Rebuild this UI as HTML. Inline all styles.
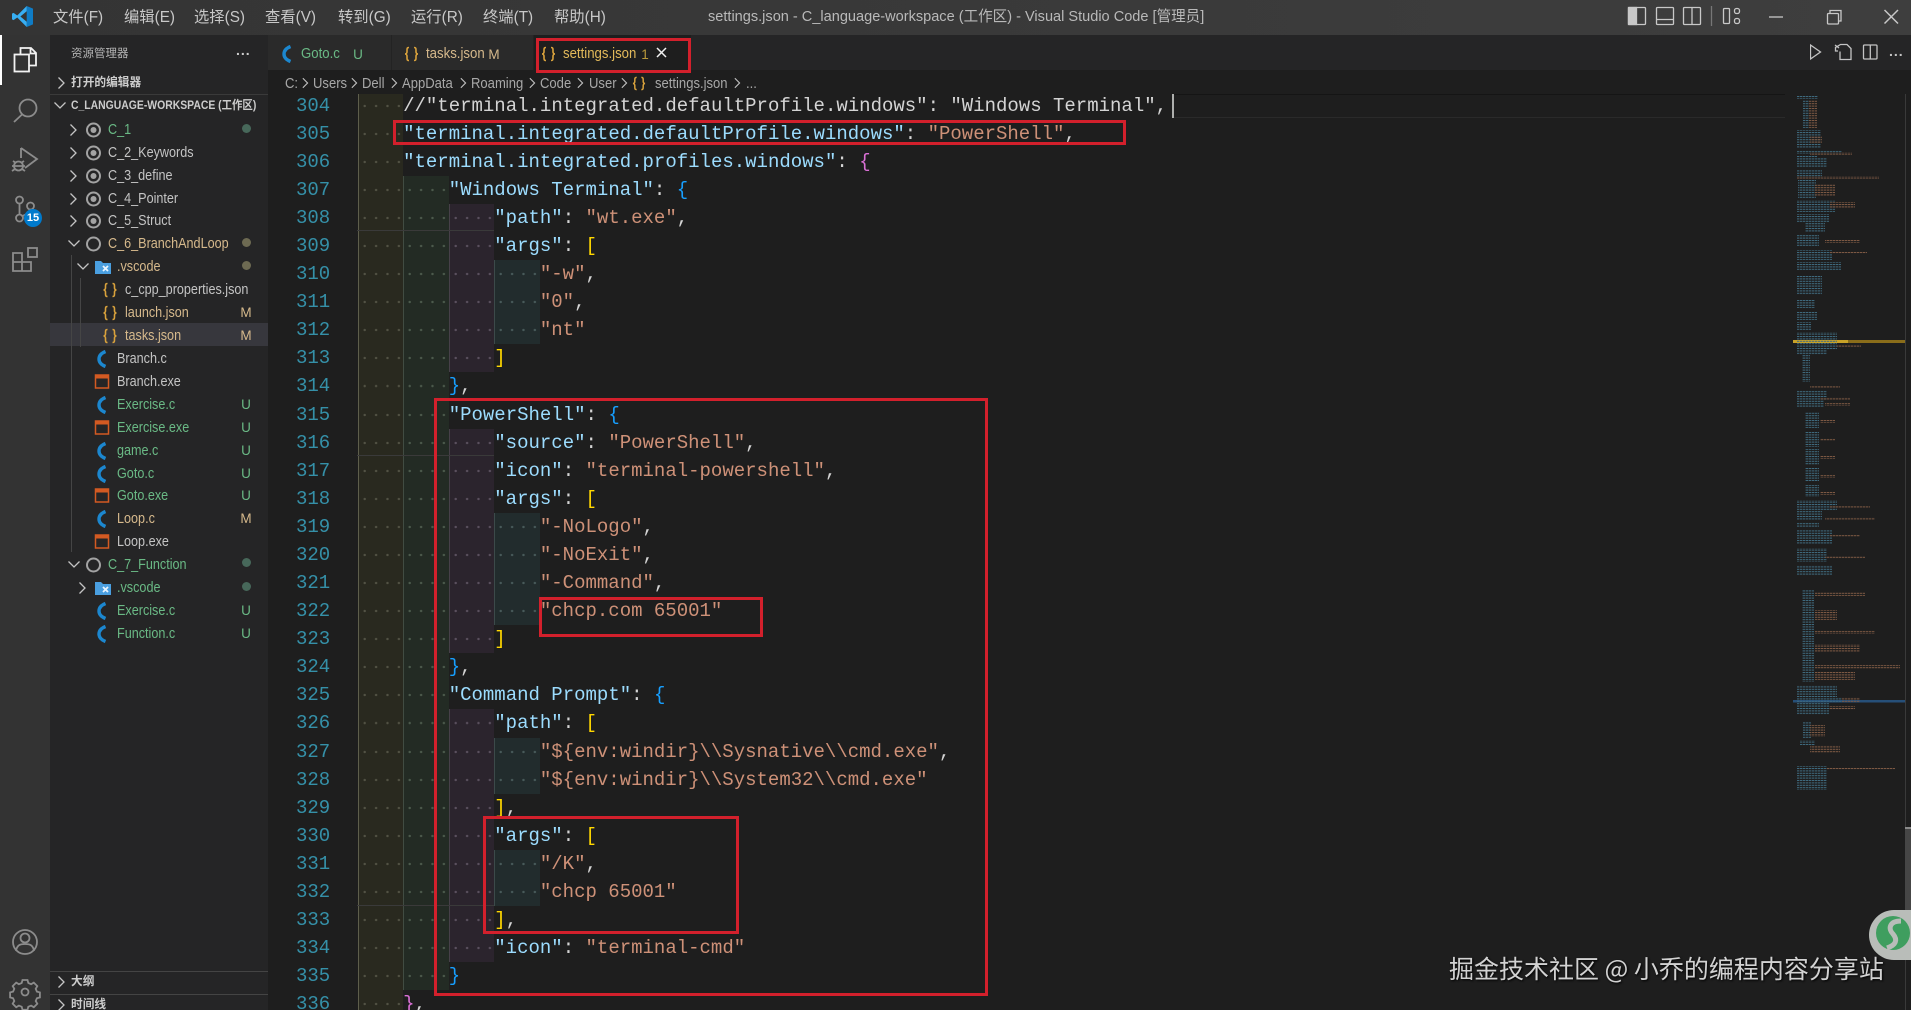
<!DOCTYPE html>
<html><head><meta charset="utf-8"><title>settings.json - C_language-workspace</title>
<style>
*{box-sizing:border-box;margin:0;padding:0}
html,body{width:1911px;height:1010px;overflow:hidden;background:#1e1e1e}
body{position:relative;font-family:"Liberation Sans","Noto Sans CJK SC",sans-serif;color:#ccc}
.a{position:absolute}
#title{left:0;top:0;width:1911px;height:35px;background:linear-gradient(to right,#343434,#3e3e3e)}
.m{position:absolute;top:8px;font-size:15.3px;line-height:19px;color:#c8c8c8;white-space:nowrap;transform-origin:0 50%;}
#wt{position:absolute;left:708px;top:7px;font-size:15px;line-height:20px;color:#b9b9b9;white-space:nowrap;transform:scaleX(.97);transform-origin:0 50%}
#act{left:0;top:35px;width:50px;height:975px;background:#333}
#side{left:50px;top:35px;width:218px;height:975px;background:#252526}
.t{position:absolute;white-space:nowrap;font-size:14.5px;line-height:23px;transform:scaleX(.87);transform-origin:0 50%;margin-top:1.5px}
.tt{transform:scaleX(.91);margin-top:0}
.b{position:absolute;white-space:nowrap;font-size:11.7px;line-height:16px;font-weight:bold;color:#ccc;transform-origin:0 50%}
.sel{left:50px;top:323px;width:218px;height:23px;background:#37373d}
.gn{color:#6ab985}.or{color:#d6b98c}.wh{color:#c4c4c4}
.st{position:absolute;left:239px;width:14px;text-align:center;font-size:13.5px;line-height:23px;margin-top:1px}
.dot{position:absolute;left:241.5px;width:9px;height:9px;border-radius:50%}
#tabs{left:268px;top:35px;width:1643px;height:35px;background:#252526}
.tab{position:absolute;top:35px;height:35px;background:#2a2a2a}
#bc{left:268px;top:70px;width:1643px;height:24px;background:#1e1e1e}
.c{position:absolute;top:72.5px;font-size:14.5px;line-height:23px;color:#a8a8a8;white-space:nowrap;transform:scaleX(.9);transform-origin:0 50%}
#ed{left:268px;top:94px;width:1643px;height:916px;background:#1e1e1e;overflow:hidden}
#code{position:absolute;left:-268px;top:-2.3px;width:1911px;font-family:"Liberation Mono",monospace;font-size:19px;line-height:28.08px;color:#d4d4d4}
.l{position:relative;height:28.08px;padding-left:357.5px;white-space:pre}
.l u{position:absolute;left:296px;top:0;text-decoration:none;color:#3590a8}
.l s{display:inline-block;width:45.6px;height:28.08px;vertical-align:top;text-decoration:none;background-size:11.4px 28.08px;background-position:0 0}
.l s:nth-of-type(1){background-image:radial-gradient(circle,#525244 1px,transparent 1.4px);background-color:#29291f;border-left:1px solid #5e5e4c}
.l s:nth-of-type(2){background-image:radial-gradient(circle,#4c5a4c 1px,transparent 1.4px);background-color:#232b24;border-left:1px solid #414c42}
.l s:nth-of-type(3){background-image:radial-gradient(circle,#5a505e 1px,transparent 1.4px);background-color:#2b242d;border-left:1px solid #474049}
.l s:nth-of-type(4){background-image:radial-gradient(circle,#485a5a 1px,transparent 1.4px);background-color:#222c2d;border-left:1px solid #3c4a4a}
i{font-style:normal}
.k{color:#9cdcfe}.v{color:#ce9178}.y{color:#ffd700}.p{color:#da70d6}.q{color:#179fff}
.rb{position:absolute;border:3px solid #d3202c}
.hl{position:absolute;left:357px;width:137px;height:1px;background:#3a3a3a}
#wm{position:absolute;left:1449px;top:949px;font-family:"Noto Sans CJK SC",sans-serif;font-size:25px;line-height:38px;color:#d2d2d2;white-space:nowrap;text-shadow:1px 1px 2px #000}
</style></head><body>

<div class="a" id="title"></div>
<svg class="a" style="left:12px;top:6px" width="21" height="21" viewBox="0 0 20 20"><path d="M14 0 20 2.5V17.5L14 20Z" fill="#0f7cc5"/><path d="M14 0 5 9 1.5 6.5 0 7.3V12.7L1.5 13.5 5 11 14 20V15L8 10 14 5Z" fill="#37aef3"/></svg>
<div class="m" style="left:53px">文件(F)</div><div class="m" style="left:124px">编辑(E)</div><div class="m" style="left:194px">选择(S)</div><div class="m" style="left:265px">查看(V)</div><div class="m" style="left:338px">转到(G)</div><div class="m" style="left:411px">运行(R)</div><div class="m" style="left:483px">终端(T)</div><div class="m" style="left:554px">帮助(H)</div>
<div id="wt">settings.json - C_language-workspace (工作区) - Visual Studio Code [管理员]</div>
<svg class="a" style="left:0;top:0" width="1911" height="35" fill="none" stroke="#c8c8c8" stroke-width="1.3">
<rect x="1628.5" y="7.5" width="17" height="17" rx="1"/><rect x="1628.5" y="7.5" width="8" height="17" fill="#c8c8c8"/>
<rect x="1656.5" y="7.5" width="17" height="17" rx="1"/><path d="M1656.5 19.5h17"/>
<rect x="1683.5" y="7.5" width="17" height="17" rx="1"/><path d="M1692 7.5v17"/>
<path d="M1711.5 6v20" stroke="#777"/>
<rect x="1723.5" y="8.5" width="6" height="15" rx="1"/><rect x="1734.5" y="8.5" width="5" height="5" rx="2"/><rect x="1734.5" y="18.5" width="5" height="5" rx="2"/>
<path d="M1769 17h14"/><rect x="1827.5" y="13.5" width="11" height="10.5" rx="1"/><path d="M1830 13v-2.5h11v10.500h-2.500"/>
<path d="M1884.500 10l13.500 13.500M1898 10l-13.500 13.500" stroke-width="1.500"/>
</svg>

<div class="a" id="act"></div>
<div class="a" style="left:0;top:35px;width:2px;height:50px;background:#fff"></div>
<svg class="a" style="left:0;top:35px" width="50" height="975" viewBox="0 35 50 975" fill="none" stroke="#8c8c8c" stroke-width="1.8">
<path d="M20.500 54v-6h10.500l5 5v12.500h-7M30.500 48v5.500h5.500" stroke="#f2f2f2"/><rect x="14.500" y="54.500" width="14.500" height="17" stroke="#f2f2f2"/>
<circle cx="28" cy="108" r="8.500"/><path d="M22 114.500 14 122"/>
<path d="M21 148 37 159 25 168M21 148v10"/><circle cx="18.500" cy="166" r="4.500"/><path d="M12 166h13M13 161l3 2M24 161l-3 2M12 171l3-2M25 171l-3-2"/>
<circle cx="19.500" cy="200" r="3.500"/><circle cx="30.500" cy="206" r="3.500"/><circle cx="19.500" cy="218" r="3.500"/><path d="M19.500 203.500v11M30.500 209.500c0 4-6 5-9 7"/>
<path d="M13 253h9v18h-9zM13 262h18v9h-9"/><rect x="28" y="248" width="9" height="9"/>
<circle cx="25" cy="942" r="12"/><circle cx="25" cy="938" r="4.500"/><path d="M16 951c1-6 4-7 9-7s8 1 9 7"/>
<circle cx="25" cy="992" r="3.500"/><path d="M22.500 980h5l.8 3 2.800 1.200 2.700-1.600 3.500 3.500-1.600 2.700 1.200 2.800 3 .8v5l-3 .8-1.200 2.800 1.600 2.700-3.500 3.500-2.700-1.600-2.800 1.200-.8 3h-5l-.8-3-2.800-1.200-2.700 1.600-3.500-3.500 1.600-2.700-1.200-2.800-3-.8v-5l3-.8 1.200-2.800-1.600-2.700 3.500-3.500 2.700 1.600 2.800-1.200z"/>
<circle cx="33" cy="218" r="9" fill="#007acc" stroke="none"/>
</svg>
<div class="a" style="left:24px;top:211px;width:18px;text-align:center;font-size:11px;line-height:14px;font-weight:bold;color:#fff">15</div>

<div class="a" id="side"></div>
<div class="a sel"></div>
<div class="a" style="left:50px;top:94px;width:218px;height:1px;background:#3a3a3a"></div>
<div class="a" style="left:50px;top:971px;width:218px;height:1px;background:#444"></div>
<div class="a" style="left:50px;top:994px;width:218px;height:1px;background:#444"></div>
<div class="a" style="left:71px;top:255px;width:1px;height:297px;background:#454545"></div>
<div class="a" style="left:80px;top:278px;width:1px;height:69px;background:#454545"></div>
<div class="a" style="left:71px;top:46px;font-size:11.5px;line-height:16px;color:#b5b5b5;white-space:nowrap">资源管理器</div>
<div class="a" style="left:236px;top:40px;font-size:14px;line-height:20px;letter-spacing:1px;color:#ccc;font-weight:bold">...</div>
<div class="b" style="left:71px;top:75px">打开的编辑器</div>
<div class="b" style="left:71px;top:98px;transform:scaleX(.89)">C_LANGUAGE-WORKSPACE (工作区)</div>
<div class="b" style="left:71px;top:974px">大纲</div>
<div class="b" style="left:71px;top:997px">时间线</div>

<svg width="0" height="0" style="position:absolute"><defs>
<symbol id="ci" viewBox="0 0 16 16"><circle cx="8" cy="8" r="6.500" fill="none" stroke="#a3a3a3" stroke-width="2"/><circle cx="8" cy="8" r="3" fill="#a3a3a3"/></symbol>
<symbol id="co" viewBox="0 0 16 16"><circle cx="8" cy="8" r="6.500" fill="none" stroke="#a3a3a3" stroke-width="2"/></symbol>
<symbol id="cf" viewBox="0 0 12 18"><path d="M9.500 1.500C4.500 3.500 3 6 3 9s1.500 5.500 6.500 7.500" fill="none" stroke="#1c87cf" stroke-width="3.400"/></symbol>
<symbol id="ex" viewBox="0 0 15 15"><rect x="1" y="1" width="13" height="13" fill="none" stroke="#d35a22" stroke-width="1.500"/><rect x="1" y="1" width="13" height="3.500" fill="#d35a22"/></symbol>
<symbol id="js" viewBox="0 0 15 16"><path d="M5 1.500C3 1.500 3 2.500 3 4.500v1.500c0 1-.8 2-2 2 1.200 0 2 1 2 2v1.500c0 2 0 3 2 3M10 1.500c2 0 2 1 2 3v1.500c0 1 .8 2 2 2-1.200 0-2 1-2 2v1.500c0 2 0 3-2 3" fill="none" stroke="#d9a23c" stroke-width="1.600"/></symbol>
<symbol id="fd" viewBox="0 0 16 14"><path d="M0 1h6l2 2h8v11H0z" fill="#4a9fe0"/><path d="M8 6l5 5M13 6l-5 5" stroke="#e8f4ff" stroke-width="1.800"/></symbol>
<symbol id="cr" viewBox="0 0 10 14"><path d="M2.500 1.500l5.500 5.500-5.500 5.500" fill="none" stroke="#c4c4c4" stroke-width="1.300"/></symbol>
<symbol id="cd" viewBox="0 0 14 10"><path d="M1.500 1.500l5.500 5.500 5.500-5.500" fill="none" stroke="#c4c4c4" stroke-width="1.300"/></symbol>
<pattern id="pt" width="3" height="2.400" patternUnits="userSpaceOnUse"><rect width="2.400" height="1" fill="#3f6b80"/></pattern>
<pattern id="po" width="3" height="2.400" patternUnits="userSpaceOnUse"><rect width="2.400" height="1" fill="#7f5a44"/></pattern>
</defs></svg>

<svg class="a" style="left:0;top:1px" width="268" height="1010">
<use href="#cr" x="56" y="75" width="10" height="14"/><use href="#cd" x="53" y="100" width="14" height="10"/>
<use href="#cr" x="56" y="974" width="10" height="14"/><use href="#cr" x="56" y="997" width="10" height="14"/>
<use href="#cr" x="68" y="122" width="10" height="14"/><use href="#cr" x="68" y="145" width="10" height="14"/><use href="#cr" x="68" y="168" width="10" height="14"/><use href="#cr" x="68" y="191" width="10" height="14"/><use href="#cr" x="68" y="213" width="10" height="14"/>
<use href="#cd" x="67" y="238" width="14" height="10"/><use href="#cd" x="76" y="261" width="14" height="10"/><use href="#cd" x="67" y="559" width="14" height="10"/><use href="#cr" x="77" y="580" width="10" height="14"/>
<use href="#ci" x="85.500" y="121" width="16" height="16"/><use href="#ci" x="85.500" y="144" width="16" height="16"/><use href="#ci" x="85.500" y="167" width="16" height="16"/><use href="#ci" x="85.500" y="190" width="16" height="16"/><use href="#ci" x="85.500" y="212" width="16" height="16"/><use href="#co" x="85.500" y="235" width="16" height="16"/><use href="#co" x="85.500" y="556" width="16" height="16"/>
<use href="#fd" x="95" y="259" width="16" height="14"/><use href="#fd" x="95" y="580" width="16" height="14"/>
<use href="#js" x="102.500" y="281" width="15" height="16"/><use href="#js" x="102.500" y="304" width="15" height="16"/><use href="#js" x="102.500" y="327" width="15" height="16"/>
<use href="#cf" x="96" y="349" width="12" height="18"/><use href="#cf" x="96" y="395" width="12" height="18"/><use href="#cf" x="96" y="441" width="12" height="18"/><use href="#cf" x="96" y="464" width="12" height="18"/><use href="#cf" x="96" y="509" width="12" height="18"/><use href="#cf" x="96" y="601" width="12" height="18"/><use href="#cf" x="96" y="624" width="12" height="18"/>
<use href="#ex" x="94.500" y="373" width="15" height="15"/><use href="#ex" x="94.500" y="419" width="15" height="15"/><use href="#ex" x="94.500" y="487" width="15" height="15"/><use href="#ex" x="94.500" y="533" width="15" height="15"/>
</svg>

<div class="t gn" style="left:108px;top:117px">C_1</div>
<div class="t wh" style="left:108px;top:140px">C_2_Keywords</div>
<div class="t wh" style="left:108px;top:163px">C_3_define</div>
<div class="t wh" style="left:108px;top:186px">C_4_Pointer</div>
<div class="t wh" style="left:108px;top:208px">C_5_Struct</div>
<div class="t or" style="left:108px;top:231px">C_6_BranchAndLoop</div>
<div class="t or" style="left:117px;top:254px">.vscode</div>
<div class="t wh" style="left:125px;top:277px">c_cpp_properties.json</div>
<div class="t or" style="left:125px;top:300px">launch.json</div>
<div class="t or" style="left:125px;top:323px">tasks.json</div>
<div class="t wh" style="left:117px;top:346px">Branch.c</div>
<div class="t wh" style="left:117px;top:369px">Branch.exe</div>
<div class="t gn" style="left:117px;top:392px">Exercise.c</div>
<div class="t gn" style="left:117px;top:415px">Exercise.exe</div>
<div class="t gn" style="left:117px;top:438px">game.c</div>
<div class="t gn" style="left:117px;top:461px">Goto.c</div>
<div class="t gn" style="left:117px;top:483px">Goto.exe</div>
<div class="t or" style="left:117px;top:506px">Loop.c</div>
<div class="t wh" style="left:117px;top:529px">Loop.exe</div>
<div class="t gn" style="left:108px;top:552px">C_7_Function</div>
<div class="t gn" style="left:117px;top:575px">.vscode</div>
<div class="t gn" style="left:117px;top:598px">Exercise.c</div>
<div class="t gn" style="left:117px;top:621px">Function.c</div>

<div class="dot" style="top:124px;background:#47685a"></div>
<div class="dot" style="top:238px;background:#6d6a52"></div>
<div class="dot" style="top:261px;background:#6d6a52"></div>
<div class="dot" style="top:558px;background:#47685a"></div>
<div class="dot" style="top:582px;background:#47685a"></div>
<div class="st or" style="top:300px">M</div><div class="st or" style="top:323px">M</div><div class="st or" style="top:506px">M</div>
<div class="st gn" style="top:392px">U</div><div class="st gn" style="top:415px">U</div><div class="st gn" style="top:438px">U</div><div class="st gn" style="top:461px">U</div><div class="st gn" style="top:483px">U</div><div class="st gn" style="top:598px">U</div><div class="st gn" style="top:621px">U</div>

<div class="a" id="tabs"></div>
<div class="tab" style="left:268px;width:124px;border-right:1px solid #232323"></div>
<div class="tab" style="left:392px;width:142px;border-right:1px solid #232323"></div>
<div class="tab" style="left:534px;width:157px;background:#1e1e1e"></div>
<svg class="a" style="left:268px;top:35px" width="450" height="35">
<use href="#cf" x="13" y="10" width="12" height="18"/><use href="#js" x="136" y="11" width="15" height="16"/><use href="#js" x="273" y="11" width="15" height="16"/>
<path d="M389 13l9 9M398 13l-9 9" stroke="#f2f2f2" stroke-width="1.500"/></svg>
<div class="t tt gn" style="left:301px;top:43px">Goto.c</div>
<div class="st gn" style="left:351px;top:42px">U</div>
<div class="t tt or" style="left:426px;top:43px">tasks.json</div>
<div class="st or" style="left:487px;top:42px">M</div>
<div class="t tt" style="left:563px;top:43px;color:#e2b95a">settings.json</div>
<div class="st" style="left:638px;top:42px;color:#b9993a">1</div>

<div class="a" id="bc"></div>
<div class="c" style="left:284.500px">C:</div><div class="c" style="left:312.500px">Users</div><div class="c" style="left:362px">Dell</div><div class="c" style="left:402px">AppData</div><div class="c" style="left:471px">Roaming</div><div class="c" style="left:540px">Code</div><div class="c" style="left:588.500px">User</div><div class="c" style="left:655px">settings.json</div><div class="c" style="left:746px">...</div>
<svg class="a" style="left:0;top:71px" width="760" height="24">
<use href="#cr" x="300" y="6" width="10" height="12"/><use href="#cr" x="349" y="6" width="10" height="12"/><use href="#cr" x="389" y="6" width="10" height="12"/><use href="#cr" x="458" y="6" width="10" height="12"/><use href="#cr" x="527" y="6" width="10" height="12"/><use href="#cr" x="575" y="6" width="10" height="12"/><use href="#cr" x="619" y="6" width="10" height="12"/><use href="#cr" x="732" y="6" width="10" height="12"/>
<use href="#js" x="632" y="5" width="14" height="15"/></svg>
<svg class="a" style="left:1810px;top:35px" width="100" height="35" fill="none" stroke="#c4c4c4" stroke-width="1.300">
<path d="M.500 10v14l10-7z"/><path d="M28 16h-2.500v-3.500l5-3h6.500l4 4v11h-11v-8M25 10l4 3"/><rect x="53.500" y="10" width="13.500" height="14" rx="1"/><path d="M60.300 10v14"/></svg>
<div class="a" style="left:1889px;top:41px;font-size:14px;line-height:20px;letter-spacing:1px;font-weight:bold;color:#c4c4c4">...</div>

<div class="a" id="ed"><div id="code">
<div class="l"><u>304</u><s></s>//"terminal.integrated.defaultProfile.windows": "Windows Terminal",</div>
<div class="l"><u>305</u><s></s><i class="k">"terminal.integrated.defaultProfile.windows"</i>: <i class="v">"PowerShell"</i>,</div>
<div class="l"><u>306</u><s></s><i class="k">"terminal.integrated.profiles.windows"</i>: <i class="p">{</i></div>
<div class="l"><u>307</u><s></s><s></s><i class="k">"Windows Terminal"</i>: <i class="q">{</i></div>
<div class="l"><u>308</u><s></s><s></s><s></s><i class="k">"path"</i>: <i class="v">"wt.exe"</i>,</div>
<div class="l"><u>309</u><s></s><s></s><s></s><i class="k">"args"</i>: <i class="y">[</i></div>
<div class="l"><u>310</u><s></s><s></s><s></s><s></s><i class="v">"-w"</i>,</div>
<div class="l"><u>311</u><s></s><s></s><s></s><s></s><i class="v">"0"</i>,</div>
<div class="l"><u>312</u><s></s><s></s><s></s><s></s><i class="v">"nt"</i></div>
<div class="l"><u>313</u><s></s><s></s><s></s><i class="y">]</i></div>
<div class="l"><u>314</u><s></s><s></s><i class="q">}</i>,</div>
<div class="l"><u>315</u><s></s><s></s><i class="k">"PowerShell"</i>: <i class="q">{</i></div>
<div class="l"><u>316</u><s></s><s></s><s></s><i class="k">"source"</i>: <i class="v">"PowerShell"</i>,</div>
<div class="l"><u>317</u><s></s><s></s><s></s><i class="k">"icon"</i>: <i class="v">"terminal-powershell"</i>,</div>
<div class="l"><u>318</u><s></s><s></s><s></s><i class="k">"args"</i>: <i class="y">[</i></div>
<div class="l"><u>319</u><s></s><s></s><s></s><s></s><i class="v">"-NoLogo"</i>,</div>
<div class="l"><u>320</u><s></s><s></s><s></s><s></s><i class="v">"-NoExit"</i>,</div>
<div class="l"><u>321</u><s></s><s></s><s></s><s></s><i class="v">"-Command"</i>,</div>
<div class="l"><u>322</u><s></s><s></s><s></s><s></s><i class="v">"chcp.com 65001"</i></div>
<div class="l"><u>323</u><s></s><s></s><s></s><i class="y">]</i></div>
<div class="l"><u>324</u><s></s><s></s><i class="q">}</i>,</div>
<div class="l"><u>325</u><s></s><s></s><i class="k">"Command Prompt"</i>: <i class="q">{</i></div>
<div class="l"><u>326</u><s></s><s></s><s></s><i class="k">"path"</i>: <i class="y">[</i></div>
<div class="l"><u>327</u><s></s><s></s><s></s><s></s><i class="v">"${env:windir}\\Sysnative\\cmd.exe"</i>,</div>
<div class="l"><u>328</u><s></s><s></s><s></s><s></s><i class="v">"${env:windir}\\System32\\cmd.exe"</i></div>
<div class="l"><u>329</u><s></s><s></s><s></s><i class="y">]</i>,</div>
<div class="l"><u>330</u><s></s><s></s><s></s><i class="k">"args"</i>: <i class="y">[</i></div>
<div class="l"><u>331</u><s></s><s></s><s></s><s></s><i class="v">"/K"</i>,</div>
<div class="l"><u>332</u><s></s><s></s><s></s><s></s><i class="v">"chcp 65001"</i></div>
<div class="l"><u>333</u><s></s><s></s><s></s><i class="y">]</i>,</div>
<div class="l"><u>334</u><s></s><s></s><s></s><i class="k">"icon"</i>: <i class="v">"terminal-cmd"</i></div>
<div class="l"><u>335</u><s></s><s></s><i class="q">}</i></div>
<div class="l"><u>336</u><s></s><i class="p">}</i>,</div>
</div></div>

<div class="a" style="left:1172.500px;top:94px;width:612px;height:1px;background:#151515"></div>
<div class="a" style="left:1172.500px;top:117px;width:612px;height:1px;background:#2a2a2a"></div>
<div class="a" style="left:1172px;top:94px;width:1.500px;height:24px;background:#aeafad"></div>
<div class="hl" style="top:230px"></div><div class="hl" style="top:455px"></div><div class="hl" style="top:905px"></div>

<svg class="a" style="left:1780px;top:94px" width="131" height="916" viewBox="1780 94 131 916">
<rect x="1793" y="340" width="112" height="3" fill="#8a6d1a"/><rect x="1793" y="340" width="55" height="3" fill="#c9a227"/>
<rect x="1793" y="700" width="112" height="2.500" fill="#264f78"/>
<g fill="url(#pt)">
<rect x="1797" y="96" width="21" height="3"/><rect x="1803" y="100" width="6" height="28"/><rect x="1797" y="130" width="24" height="18"/><rect x="1797" y="150" width="45" height="4"/><rect x="1797" y="155" width="20" height="3"/><rect x="1797" y="158" width="30" height="10"/><rect x="1797" y="170" width="25" height="8"/><rect x="1798" y="180" width="18" height="18"/><rect x="1797" y="200" width="38" height="12"/><rect x="1797" y="214" width="32" height="8"/><rect x="1805" y="222" width="20" height="10"/><rect x="1797" y="235" width="22" height="11"/><rect x="1797" y="250" width="35" height="10"/><rect x="1797" y="262" width="44" height="8"/><rect x="1797" y="275" width="25" height="20"/>
<rect x="1797" y="300" width="18" height="8"/><rect x="1797" y="312" width="20" height="8"/><rect x="1797" y="322" width="14" height="8"/><rect x="1797" y="332" width="40" height="18"/><rect x="1797" y="350" width="30" height="5"/><rect x="1802" y="355" width="8" height="27"/><rect x="1797" y="390" width="30" height="10"/><rect x="1797" y="400" width="27" height="8"/>
<rect x="1805" y="412" width="14" height="16"/><rect x="1805" y="431" width="14" height="16"/><rect x="1805" y="449" width="14" height="16"/><rect x="1805" y="467" width="14" height="14"/><rect x="1805" y="485" width="14" height="12"/>
<rect x="1797" y="500" width="40" height="10"/><rect x="1797" y="510" width="25" height="10"/><rect x="1797" y="522" width="22" height="6"/><rect x="1797" y="530" width="35" height="14"/><rect x="1797" y="548" width="30" height="14"/><rect x="1797" y="565" width="35" height="10"/>
<rect x="1802" y="590" width="12" height="92"/><rect x="1797" y="685" width="40" height="12"/><rect x="1797" y="697" width="45" height="6"/><rect x="1797" y="703" width="32" height="12"/><rect x="1803" y="722" width="8" height="16"/><rect x="1800" y="740" width="15" height="5"/><rect x="1797" y="766" width="30" height="4"/><rect x="1797" y="770" width="30" height="20"/>
</g>
<g fill="url(#po)">
<rect x="1809" y="100" width="8" height="28"/><rect x="1810" y="136" width="12" height="8"/><rect x="1810" y="152" width="42" height="3"/><rect x="1797" y="176" width="82" height="2.500"/><rect x="1815" y="184" width="20" height="12"/><rect x="1830" y="202" width="25" height="6"/><rect x="1825" y="240" width="35" height="3"/><rect x="1830" y="251" width="37" height="3"/><rect x="1837" y="345" width="24" height="3"/><rect x="1810" y="386" width="30" height="2.500"/><rect x="1820" y="397" width="30" height="3"/><rect x="1825" y="403" width="25" height="3"/>
<rect x="1820" y="420" width="15" height="3"/><rect x="1820" y="438" width="15" height="3"/><rect x="1820" y="456" width="15" height="3"/><rect x="1820" y="475" width="15" height="3"/><rect x="1820" y="492" width="15" height="3"/>
<rect x="1830" y="506" width="40" height="2.500"/><rect x="1825" y="517" width="50" height="2.500"/><rect x="1830" y="535" width="30" height="2.500"/><rect x="1825" y="556" width="40" height="2.500"/>
<rect x="1815" y="592" width="50" height="4"/><rect x="1815" y="610" width="22" height="10"/><rect x="1815" y="630" width="60" height="4"/><rect x="1815" y="644" width="45" height="8"/><rect x="1815" y="665" width="85" height="4"/><rect x="1815" y="672" width="40" height="8"/><rect x="1842" y="697" width="18" height="6"/><rect x="1829" y="706" width="26" height="4"/><rect x="1810" y="725" width="15" height="12"/><rect x="1810" y="745" width="30" height="8"/><rect x="1827" y="767" width="68" height="2.500"/>
</g>
</svg>
<div class="a" style="left:1905px;top:94px;width:1px;height:916px;background:#3a3a3a"></div>
<div class="a" style="left:1905px;top:827px;width:6px;height:90px;background:#464646;border-top:2px solid #8a8a8a"></div>

<div class="rb" style="left:536px;top:38px;width:155px;height:35px"></div>
<div class="rb" style="left:392.500px;top:120px;width:733.500px;height:25px"></div>
<div class="rb" style="left:433.500px;top:398px;width:554.500px;height:598px"></div>
<div class="rb" style="left:539px;top:597px;width:224px;height:40px"></div>
<div class="rb" style="left:483px;top:816px;width:256px;height:118px"></div>

<svg class="a" style="left:1869px;top:910px" width="42" height="50"><path d="M25 0H42V50H25A25 25 0 0 1 25 0Z" fill="#b9bdb9"/><circle cx="24" cy="23" r="17" fill="#3f9e5f"/><path d="M32 11C20 11 19 19 24 24 29 30 27 35 18 38" fill="none" stroke="#b9bdb9" stroke-width="5"/></svg>
<div id="wm">掘金技术社区 @ 小乔的编程内容分享站</div>
</body></html>
